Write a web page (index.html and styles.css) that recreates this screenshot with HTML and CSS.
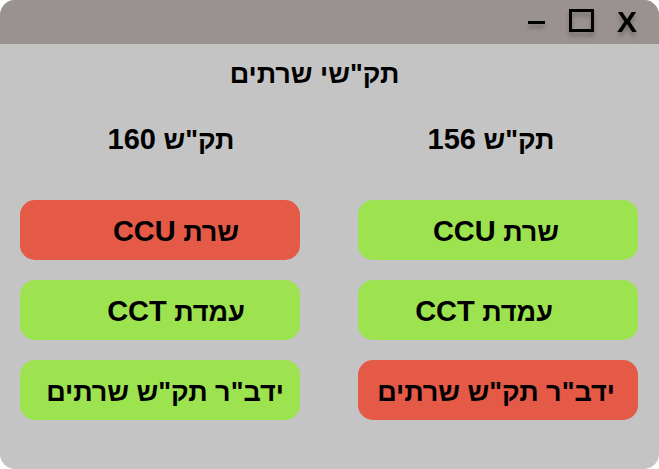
FILE: index.html
```html
<!DOCTYPE html>
<html lang="he" dir="rtl">
<head>
<meta charset="utf-8">
<meta name="viewport" content="width=device-width, initial-scale=1">
<title>תק"שי שרתים</title>
<link rel="stylesheet" href="styles.css">
</head>
<body>
<main class="window">
  <header class="titlebar">
    <button class="control" type="button" aria-label="סגירה"><span class="close">X</span></button>
    <button class="control" type="button" aria-label="הגדלה">
      <svg class="icon" width="25" height="26" viewBox="0 0 25 26"><path d="M1.5 1.5h22v20h-22z" fill="none" stroke="#000" stroke-width="3"/></svg>
    </button>
    <button class="control" type="button" aria-label="מזעור">
      <svg class="icon" width="18" height="26" viewBox="0 0 18 26"><path d="M0 13.5h17" fill="none" stroke="#000" stroke-width="3"/></svg>
    </button>
  </header>
  <h1 class="title">תק"שי שרתים</h1>
  <div class="columns">
    <section class="column">
      <h2 class="heading nudge-left">תק"ש <span class="latin">156</span></h2>
      <button class="status ok" type="button"><span>שרת <span class="latin">CCU</span></span></button>
      <button class="status ok shift-left" type="button"><span>עמדת <span class="latin">CCT</span></span></button>
      <button class="status fault" type="button">ידב"ר תק"ש שרתים</button>
    </section>
    <section class="column">
      <h2 class="heading inset-right">תק"ש <span class="latin">160</span></h2>
      <button class="status fault shift-right" type="button"><span>שרת <span class="latin">CCU</span></span></button>
      <button class="status ok shift-right" type="button"><span>עמדת <span class="latin">CCT</span></span></button>
      <button class="status ok nudge-right" type="button">ידב"ר תק"ש שרתים</button>
    </section>
  </div>
</main>
</body>
</html>
```

FILE: styles.css
```css
* {
  box-sizing: border-box;
}

body {
  margin: 0;
  background: #fff;
  color: #000;
  font-family: "Liberation Sans", Arial, sans-serif;
}

.window {
  min-height: 100vh;
  background: #c4c4c4;
  border-radius: 15px;
  overflow: hidden;
}

.titlebar {
  display: flex;
  align-items: center;
  gap: 23px;
  height: 44px;
  padding: 0 22px;
  background: #999291;
}

.control {
  display: flex;
  padding: 0;
  border: 0;
  background: none;
  color: inherit;
  cursor: pointer;
  filter: drop-shadow(0 4px 2px rgba(0, 0, 0, 0.25));
}

.close {
  font: bold 30px/40px "Liberation Sans", Arial, sans-serif;
}

.icon {
  display: block;
}

.title,
.heading,
.status {
  margin: 0;
  font: bold 27px/60px "Liberation Sans", Arial, sans-serif;
  text-align: center;
  white-space: nowrap;
}

.latin {
  font-size: 29px;
  line-height: 1;
}

.title {
  padding-right: 30px;
}

.columns {
  display: grid;
  grid-template-columns: 1fr 1fr;
  gap: 58px;
  padding: 6px 21px 20px 20px;
}

.column {
  display: flex;
  flex-direction: column;
  gap: 20px;
  min-width: 0;
}

.heading {
  margin-bottom: 10px;
}

.status {
  height: 60px;
  padding: 2px 4px 0 0;
  border: 0;
  border-radius: 15px;
  color: inherit;
  cursor: pointer;
}

.ok {
  background: #9de24f;
}

.fault {
  background: #e55947;
}

.shift-left {
  padding-right: 28px;
}

.nudge-left {
  padding-right: 14px;
}

.shift-right {
  padding-left: 36px;
}

.inset-right {
  padding-left: 22px;
}

.nudge-right {
  padding-left: 14px;
}
```
